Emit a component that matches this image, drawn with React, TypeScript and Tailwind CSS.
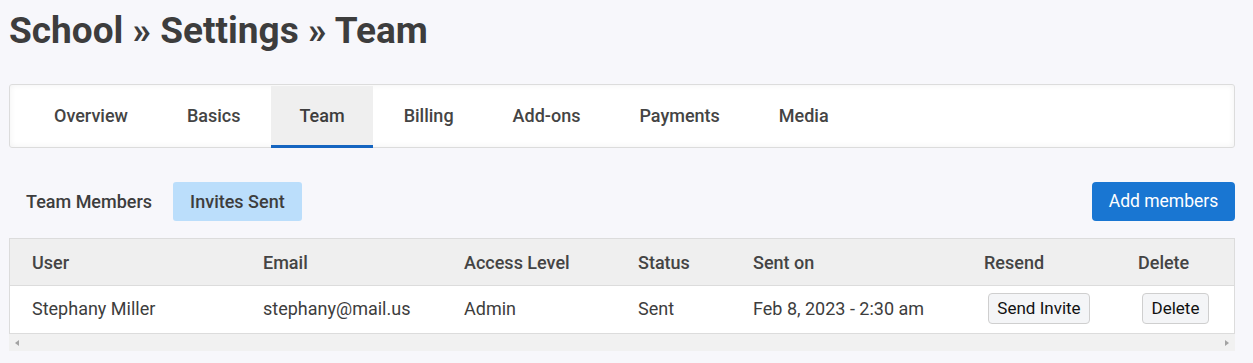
import React from "react";

const tabs = ["Overview", "Basics", "Team", "Billing", "Add-ons", "Payments", "Media"];

const columns = [
  { label: "User", width: "w-[231px]" },
  { label: "Email", width: "w-[201px]" },
  { label: "Access Level", width: "w-[174px]" },
  { label: "Status", width: "w-[115px]" },
  { label: "Sent on", width: "w-[231px]" },
  { label: "Resend", width: "w-[154px]" },
  { label: "Delete", width: "flex-1" },
];

export default function App() {
  return (
    <div className="min-h-screen bg-[#f7f7fb] pl-[9px] pr-[18px] font-['Roboto',sans-serif] text-[#444]">
      {/* Page title */}
      <h1 className="pt-[10px] text-[37px] font-bold leading-[42px] text-[#3d3d3d]">
        School » Settings » Team
      </h1>

      {/* Settings tabs */}
      <div className="mt-[32px] flex h-[64px] gap-[3px] rounded-[3px] border border-[#dcdcdc] bg-white pl-[16px] shadow-[inset_0_0_6px_rgba(0,0,0,0.06)]">
        {tabs.map((tab) => (
          <div
            key={tab}
            className={`mt-[1px] flex h-[62px] items-center border-b-[3px] px-[28px] pb-[1px] text-[18px] font-medium ${
              tab === "Team"
                ? "border-[#1565c0] bg-[#efefef] text-[#3d3d3d]"
                : "border-transparent text-[#444]"
            }`}
          >
            {tab}
          </div>
        ))}
      </div>

      {/* Sub nav */}
      <div className="mt-[34px] flex items-center justify-between">
        <div className="flex items-center gap-[4px]">
          <div className="flex h-[39px] items-center px-[17px] text-[18px] font-medium text-[#3d3d3d]">
            Team Members
          </div>
          <div className="flex h-[39px] items-center rounded-[3px] bg-[#bbdefb] px-[17px] text-[18px] font-medium text-[#3d3d3d]">
            Invites Sent
          </div>
        </div>
        <button className="flex h-[39px] w-[143px] items-center justify-center rounded-[4px] bg-[#1976d2] text-[17.5px] text-white">
          Add members
        </button>
      </div>

      {/* Invites table */}
      <div className="mt-[17px] border-x border-t border-[#dcdcdc]">
        <div className="flex h-[47px] items-center border-b border-[#dcdcdc] bg-[#efefef]">
          {columns.map((c) => (
            <div key={c.label} className={`${c.width} pl-[22px] text-[18px] font-medium text-[#444]`}>
              {c.label}
            </div>
          ))}
        </div>
        <div className="flex h-[48px] items-center border-b border-[#dcdcdc] bg-white pb-[2px] text-[18px] text-[#3d3d3d]">
          <div className="w-[231px] pl-[22px]">Stephany Miller</div>
          <div className="w-[201px] pl-[22px]">stephany@mail.us</div>
          <div className="w-[174px] pl-[22px]">Admin</div>
          <div className="w-[115px] pl-[22px]">Sent</div>
          <div className="w-[231px] pl-[22px]">Feb 8, 2023 - 2:30 am</div>
          <div className="w-[154px] pl-[26px]">
            <button className="h-[31px] w-[102px] rounded-[4px] border border-[#cfcfcf] bg-[#f4f5f7] text-[17px] text-[#111]">
              Send Invite
            </button>
          </div>
          <div className="flex-1 pl-[26px]">
            <button className="h-[31px] w-[67px] rounded-[4px] border border-[#cfcfcf] bg-[#f4f5f7] text-[17px] text-[#111]">
              Delete
            </button>
          </div>
        </div>
        {/* horizontal scrollbar */}
        <div className="-mx-px flex h-[17px] items-center justify-between bg-[#f1f1f1] px-[4px]">
          <svg width="8" height="8" viewBox="0 0 8 8">
            <path d="M6 1 L2 4 L6 7 Z" fill="#a3a3a3" />
          </svg>
          <svg width="8" height="8" viewBox="0 0 8 8">
            <path d="M2 1 L6 4 L2 7 Z" fill="#a3a3a3" />
          </svg>
        </div>
      </div>
    </div>
  );
}
